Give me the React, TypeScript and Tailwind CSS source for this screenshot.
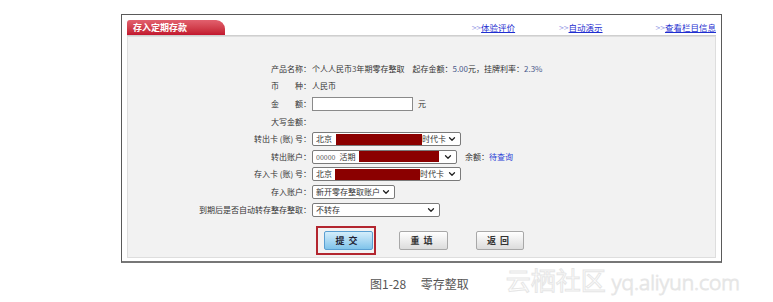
import React from "react";
import { ChevronDown } from "lucide-react";

const Redact = ({ w }: { w: number }) => (
  <span className="inline-block h-[11px] bg-[#8b0000]" style={{ width: w }} />
);

const Select = ({
  width,
  children,
}: {
  width: number;
  children: React.ReactNode;
}) => (
  <div
    className="flex h-[14px] items-center border border-[#7a7a7a] bg-white pl-[3px] pr-[3px] rounded-[2px]"
    style={{ width }}
  >
    <div className="flex flex-1 items-center overflow-hidden whitespace-nowrap">{children}</div>
    <ChevronDown size={10} strokeWidth={3} className="text-[#222]" />
  </div>
);

const Row = ({ label, children }: { label: string; children?: React.ReactNode }) => (
  <div className="flex h-[17.6px] items-center">
    <div className="w-[121px] shrink-0 text-right whitespace-pre">{label}</div>
    <div className="ml-[1px] flex items-center">{children}</div>
  </div>
);

const GrayButton = ({ text, w }: { text: string; w: number }) => (
  <button
    className="h-[19px] rounded-[2px] border border-[#a8a8a8] bg-gradient-to-b from-white to-[#dcdcdc] text-[9px] font-bold tracking-[4px] text-[#333]"
    style={{ width: w }}
  >
    {text}
  </button>
);

const HeadLink = ({ text, className = "" }: { text: string; className?: string }) => (
  <a className={"flex items-center " + className}>
    <span className="text-[#9aa0e6]">&gt;&gt;</span>
    <span className="underline text-[#1f2fd0]">{text}</span>
  </a>
);

export default function App() {
  return (
    <div className="relative h-[302px] w-[773px] overflow-hidden bg-white font-['Noto_Sans_CJK_SC',sans-serif] text-[#333]">
      {/* frame */}
      <div className="ml-[121px] mt-[14px] h-[249px] w-[601px] border border-b-2 border-[#5a5a5a] border-b-[#777] bg-white px-[5px] pt-[5px]">
        {/* header */}
        <div className="flex h-[16px] items-end border-b border-[#cfcfcf]">
          <div className="flex h-[15px] w-[98px] items-center rounded-tl-[3px] rounded-tr-[9px] bg-gradient-to-b from-[#e2606e] to-[#c2142e] pl-[6px] text-[9px] font-bold text-white">
            存入定期存款
          </div>
          <div className="ml-auto flex h-full items-center self-start text-[8.5px]">
            <HeadLink text="体验评价" />
            <HeadLink text="自动演示" className="ml-[44px]" />
            <HeadLink text="查看栏目信息" className="ml-[53px]" />
          </div>
        </div>

        {/* content */}
        <div className="h-[222px] border border-[#dedede] bg-[#f2f2f2] pl-[62px] pt-[23px] text-[8px]">
          <Row label="产品名称：">
            <span>个人人民币</span>
            <span className="text-[#555]">3</span>
            <span>年期零存整取</span>
            <span className="ml-[8px]">起存金额：</span>
            <span className="text-[#4a5a8a]">5.00</span>
            <span>元，挂牌利率：</span>
            <span className="text-[#4a5a8a]">2.3%</span>
          </Row>
          <Row label="币　　种：">人民币</Row>
          <Row label="金　　额：">
            <div className="h-[14px] w-[101px] border border-[#8a8a8a] bg-white" />
            <span className="ml-[5px]">元</span>
          </Row>
          <Row label="大写金额：" />
          <Row label="转出卡 (账) 号：">
            <Select width={149}>
              <span>北京</span>
              <span className="ml-[4px] inline-flex"><Redact w={86} /></span>
              <span>时代卡</span>
            </Select>
          </Row>
          <Row label="转出账户：">
            <Select width={145}>
              <span className="text-[7px] text-[#555]">00000</span>
              <span className="ml-[4px]">活期</span>
              <span className="ml-[4px] inline-flex"><Redact w={80} /></span>
            </Select>
            <span className="ml-[8px]">余额：</span>
            <span className="text-[#2b3fd6]">待查询</span>
          </Row>
          <Row label="存入卡 (账) 号：">
            <Select width={149}>
              <span>北京</span>
              <span className="ml-[3px] inline-flex"><Redact w={85} /></span>
              <span>时代卡</span>
            </Select>
          </Row>
          <Row label="存入账户：">
            <Select width={83}>
              <span>新开零存整取账户</span>
            </Select>
          </Row>
          <Row label="到期后是否自动转存整存整取：">
            <Select width={128}>
              <span>不转存</span>
            </Select>
          </Row>

          {/* buttons */}
          <div className="ml-[126px] mt-[8px] flex items-center">
            <div className="border-2 border-[#b3262f] pb-[3px] pl-[6px] pr-[1px] pt-[3px]">
              <button className="h-[19px] w-[49px] rounded-[2px] border border-[#5a9fd2] bg-gradient-to-b from-[#d4eefb] to-[#7fc3ea] text-[9px] font-bold tracking-[4px] text-[#223]">
                提交
              </button>
            </div>
            <div className="ml-[23px]">
              <GrayButton text="重填" w={49} />
            </div>
            <div className="ml-[28px]">
              <GrayButton text="返回" w={48} />
            </div>
          </div>
        </div>
      </div>

      {/* caption */}
      <div className="flex items-center">
        <div className="ml-[370px] mt-[11px] text-[12px] text-[#555] whitespace-pre">图1-28　 零存整取</div>
        <div className="ml-[37px] mt-[4px] flex items-baseline whitespace-nowrap leading-none text-white">
          <span className="text-[25px] [-webkit-text-stroke:1px_#e6e6e6]">云栖社区</span>
          <span className="ml-[6px] font-['Open_Sans',sans-serif] text-[21px] font-light [-webkit-text-stroke:1px_#e6e6e6]">
            yq.aliyun.com
          </span>
        </div>
      </div>
    </div>
  );
}
